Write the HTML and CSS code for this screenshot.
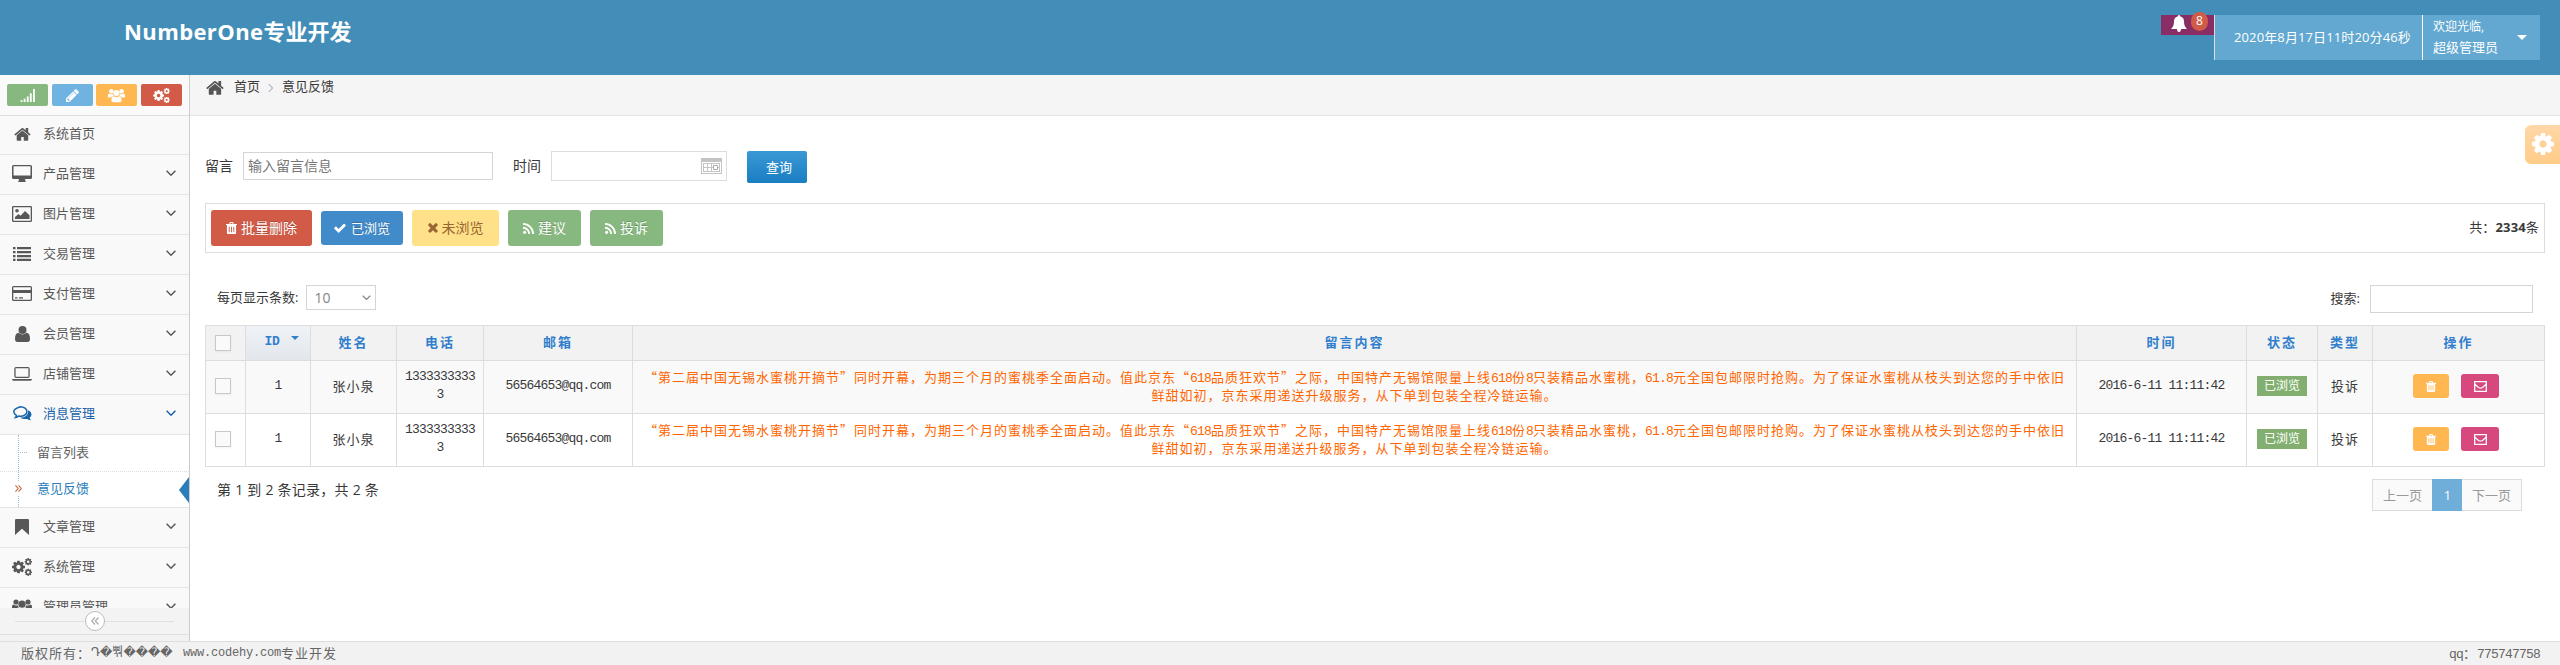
FILE: index.html
```html
<!DOCTYPE html>
<html lang="zh-CN">
<head>
<meta charset="utf-8">
<title>意见反馈</title>
<link rel="stylesheet" href="styles.css">
</head>
<body>
<svg class="defs" width="0" height="0">
  <symbol id="home" viewBox="60 160 1680 1400"><path d="M1472 992v480q0 26-19 45t-45 19h-384v-384h-256v384h-384q-26 0-45-19t-19-45v-480q0-1 .5-3t.5-3l575-474 575 474q1 2 1 6zm223-69l-62 74q-8 9-21 11h-3q-13 0-21-7l-692-577-692 577q-12 8-24 7-13-2-21-11l-62-74q-8-10-7-23.500t11-21.500l719-599q32-26 76-26t76 26l244 204v-195q0-14 9-23t23-9h192q14 0 23 9t9 23v408l219 182q10 8 11 21.500t-7 23.500z"/></symbol>
  <symbol id="cog" viewBox="128 128 1536 1536"><path d="M1152 896q0-106-75-181t-181-75-181 75-75 181 75 181 181 75 181-75 75-181zm512-109v222q0 12-8 23t-20 13l-185 28q-19 54-39 91 35 50 107 138 10 12 10 25t-9 23q-27 37-99 108t-94 71q-12 0-26-9l-138-108q-44 23-91 38-16 136-29 186-7 28-36 28h-222q-14 0-24.500-8.500t-11.500-21.500l-28-184q-49-16-90-37l-141 107q-10 9-25 9-14 0-25-11-126-114-165-168-7-10-7-23 0-12 8-23 15-21 51-66.500t54-70.500q-27-50-41-99l-183-27q-13-2-21-12.500t-8-23.500v-222q0-12 8-23t19-13l186-28q14-46 39-92-40-57-107-138-10-12-10-24 0-10 9-23 26-36 98.500-107.500t94.500-71.500q13 0 26 10l138 107q44-23 91-38 16-136 29-186 7-28 36-28h222q14 0 24.500 8.500t11.500 21.500l28 184q49 16 90 37l142-107q9-9 24-9 13 0 25 10 129 119 165 170 7 8 7 22 0 12-8 23-15 21-51 66.500t-54 70.500q26 50 41 98l183 28q13 2 21 12.500t8 23.500z"/></symbol>
  <symbol id="cogs" viewBox="0 0 20 18"><use href="#cog" x="0" y="2.500" width="13" height="13"/><use href="#cog" x="12.500" y="0" width="7.500" height="7.500"/><use href="#cog" x="12.500" y="10.500" width="7.500" height="7.500"/></symbol>
  <symbol id="pencil" viewBox="128 128 1536 1536"><path d="M491 1536l91-91-235-235-91 91v107h128v128h107zm523-928q0-22-22-22-10 0-17 7l-542 542q-7 7-7 17 0 22 22 22 10 0 17-7l542-542q7-7 7-17zm-54-192l416 416-832 832h-416v-416zm683 96q0 53-37 90l-166 166-416-416 166-165q36-38 90-38 53 0 91 38l235 234q37 39 37 91z"/></symbol>
  <symbol id="check" viewBox="100 250 1600 1300"><path d="M1671 566q0 40-28 68l-724 724-136 136q-28 28-68 28t-68-28l-136-136-362-362q-28-28-28-68t28-68l136-136q28-28 68-28t68 28l294 295 656-657q28-28 68-28t68 28l136 136q28 28 28 68z"/></symbol>
  <symbol id="times" viewBox="290 290 1220 1220"><path d="M1490 1322q0 40-28 68l-136 136q-28 28-68 28t-68-28l-294-294-294 294q-28 28-68 28t-68-28l-136-136q-28-28-28-68t28-68l294-294-294-294q-28-28-28-68t28-68l136-136q28-28 68-28t68 28l294 294 294-294q28-28 68-28t68 28l136 136q28 28 28 68t-28 68l-294 294 294 294q28 28 28 68z" transform="translate(0 -62)"/></symbol>
  <symbol id="signal" viewBox="0 0 16 14"><path d="M0 12h2v2H0zM3.300 10.500h2V14h-2zM6.700 8h2v6h-2zM10 4.500h2V14h-2zM13.400 0h2v14h-2z"/></symbol>
  <symbol id="group" viewBox="0 0 20 16"><circle cx="4" cy="3" r="2.600"/><circle cx="16" cy="3" r="2.600"/><circle cx="10" cy="5.200" r="3.600"/><path d="M0 10V7.500Q0 5.500 1.500 5.500Q3.500 7 6 6.200Q6 7.500 6.700 8.600Q4.500 8.800 3.500 10.300H1Q0 10.300 0 10zM20 10V7.500q0-2-1.500-2Q16.500 7 14 6.200q0 1.300-.7 2.400 2.200.2 3.200 1.700H19q1 0 1-.3zM4 14q0-5 3-5.200 3 2 6 0 3 .2 3 5.200 0 2-2 2H6q-2 0-2-2z"/></symbol>
  <symbol id="desktop" viewBox="0 0 20 17"><path fill-rule="evenodd" d="M1.500 0h17Q20 0 20 1.500v11q0 1.500-1.500 1.500H13l.4 2 .6 1H6l.6-1 .4-2H1.500Q0 14 0 12.500v-11Q0 0 1.500 0zm0 1.300v9.200h17V1.300z"/></symbol>
  <symbol id="image" viewBox="0 0 20 16"><path fill-rule="evenodd" d="M1.300 0h17.400Q20 0 20 1.300v13.400q0 1.300-1.300 1.300H1.300Q0 16 0 14.700V1.300Q0 0 1.300 0zm0 1.300v13.400h17.400V1.300z"/><circle cx="5" cy="4.800" r="1.800"/><path d="M3 13v-2l3.500-3 2 1.700L13 5l4.500 4.300V13z"/></symbol>
  <symbol id="list" viewBox="0 0 18 14"><path d="M0 0h2.500v2.200H0zM4 0h14v2.200H4zM0 4h2.500v2.200H0zM4 4h14v2.200H4zM0 8h2.500v2.200H0zM4 8h14v2.200H4zM0 11.800h2.500V14H0zM4 11.800h14V14H4z"/></symbol>
  <symbol id="card" viewBox="0 0 20 15"><path fill-rule="evenodd" d="M1.500 0h17Q20 0 20 1.500v12q0 1.500-1.500 1.500h-17Q0 15 0 13.500v-12Q0 0 1.500 0zm-.2 1.300V4h17.400V1.300zM1.300 7v6.700h17.400V7zM3 11.300h2.500v1.200H3zm4 0h4v1.200H7z"/></symbol>
  <symbol id="user" viewBox="0 0 15 16"><circle cx="7.500" cy="4" r="4"/><path d="M0 13q0-6 3.500-6.200 4 3.200 8 0Q15 7 15 13q0 3-2.500 3h-10Q0 16 0 13z"/></symbol>
  <symbol id="laptop" viewBox="0 0 20 14"><path fill-rule="evenodd" d="M4 0h12q1.700 0 1.700 1.700v7.600Q17.700 11 16 11H4q-1.700 0-1.700-1.700V1.700Q2.300 0 4 0zm-.4 1.300v8.400h12.800V1.300zM0 12h20q0 1.800-1.600 1.800H1.600Q0 13.800 0 12z"/></symbol>
  <symbol id="comments" viewBox="0 0 19 15"><path fill="none" stroke="currentColor" stroke-width="1.500" d="M7.300.8C11 .8 13.900 2.900 13.900 5.500S11 10.300 7.300 10.300q-.9 0-1.700-.2Q4.200 11.200 2.500 11.500q.8-1 .9-2.200Q.8 7.900.8 5.500.8 2.900 7.300.8z"/><path d="M15.300 4.200Q18.500 5.800 18.500 8.200q0 2-1.800 3.500.3 1.500 1.500 2.600-2.300 0-4-1.400Q9.800 13.600 7 11.700q8 0 8.300-7.500z"/></symbol>
  <symbol id="bookmark" viewBox="0 0 14 16"><path d="M1.200 0h11.600Q14 0 14 1.200V16l-7-6.300L0 16V1.200Q0 0 1.200 0z"/></symbol>
  <symbol id="trash" viewBox="0 0 12 13"><path fill-rule="evenodd" d="M0 2h3.500L4 .6Q4.200 0 5 0h2q.8 0 1 .6L8.500 2H12v1.200h-1V12q0 1-1 1H2q-1 0-1-1V3.200H0zm5-1l-.3 1h2.600L7 1zM3 5v6h1V5zm2.500 0v6h1V5zM8 5v6h1V5z"/></symbol>
  <symbol id="rss" viewBox="0 0 12 12"><circle cx="1.800" cy="10.200" r="1.700"/><path fill="none" stroke="currentColor" stroke-width="2" d="M0 5.200A6.800 6.800 0 0 1 6.800 12M0 1A11 11 0 0 1 11 12"/></symbol>
  <symbol id="bell" viewBox="0 0 16 17"><path d="M8 0q1 0 1 1.300 4 .9 4 5.200 0 5 3 7.500H10q0 3-2 3t-2-3H0q3-2.500 3-7.500 0-4.300 4-5.200Q7 0 8 0z"/></symbol>
  <symbol id="mail" viewBox="0 0 13 11"><path fill="none" stroke="currentColor" stroke-width="1.300" d="M.7.700h11.600v9.600H.7zM.7 3l3.800 3.500q2 1.400 4 0L12.300 3"/></symbol>
  <symbol id="down" viewBox="0 0 10 7"><path fill="none" stroke="currentColor" stroke-width="1.500" d="M.6.800L5 5.200 9.400.8"/></symbol>
  <symbol id="dleft" viewBox="0 0 8 8"><path fill="none" stroke="currentColor" stroke-width="1.200" d="M4 .5L.8 4 4 7.500M7.500.5L4.300 4l3.200 3.500"/></symbol>
  <symbol id="dright" viewBox="0 0 8 8"><path fill="none" stroke="currentColor" stroke-width="1.200" d="M.5.500L3.700 4 .5 7.500M4 .5L7.200 4 4 7.500"/></symbol>
  <symbol id="calendar" viewBox="0 0 21 16"><path fill="#c4c4c4" d="M0 0h21v16H0z"/><path fill="#fff" d="M1 4h19v11H1z"/><path fill="none" stroke="#c4c4c4" d="M2 5.500h17M2 9.500h16M2 13.500h17M2.500 5v9M6.500 5v9M10.500 5v9M18.500 5v9"/><path fill="#fff" stroke="#aaa" d="M12.500 7.500h4v4h-4z"/></symbol>
</svg>

<header class="topbar">
  <h1 class="brand"><span class="brand-latin">NumberOne</span>专业开发</h1>
  <div class="topnav">
    <div class="notice"><svg class="bell"><use href="#bell"/></svg><span class="count">8</span></div>
    <div class="clock">2020年8月17日11时20分46秒</div>
    <div class="account"><div class="who"><span class="hello">欢迎光临,</span><span>超级管理员</span></div><i class="caret"></i></div>
  </div>
</header>

<div class="body">
  <aside class="sidebar">
    <div class="shortcuts">
      <span class="sc green"><svg width="16" height="13"><use href="#signal"/></svg></span>
      <span class="sc blue"><svg width="13" height="13"><use href="#pencil"/></svg></span>
      <span class="sc orange"><svg width="17" height="15"><use href="#group"/></svg></span>
      <span class="sc red"><svg width="17" height="15"><use href="#cogs"/></svg></span>
    </div>
    <nav class="menu">
      <div class="item first"><span class="ic"><svg width="17" height="14"><use href="#home"/></svg></span>系统首页</div>
      <div class="item"><span class="ic"><svg width="20" height="17"><use href="#desktop"/></svg></span>产品管理<svg class="chev"><use href="#down"/></svg></div>
      <div class="item"><span class="ic"><svg width="20" height="16"><use href="#image"/></svg></span>图片管理<svg class="chev"><use href="#down"/></svg></div>
      <div class="item"><span class="ic"><svg width="18" height="14"><use href="#list"/></svg></span>交易管理<svg class="chev"><use href="#down"/></svg></div>
      <div class="item"><span class="ic"><svg width="20" height="15"><use href="#card"/></svg></span>支付管理<svg class="chev"><use href="#down"/></svg></div>
      <div class="item"><span class="ic"><svg width="15" height="16"><use href="#user"/></svg></span>会员管理<svg class="chev"><use href="#down"/></svg></div>
      <div class="item"><span class="ic"><svg width="20" height="14"><use href="#laptop"/></svg></span>店铺管理<svg class="chev"><use href="#down"/></svg></div>
      <div class="item open"><span class="ic"><svg width="19" height="15"><use href="#comments"/></svg></span>消息管理<svg class="chev"><use href="#down"/></svg></div>
      <div class="submenu">
        <div class="sub">留言列表</div>
        <div class="sub current"><span class="mark"><svg width="7" height="7"><use href="#dright"/></svg></span>意见反馈</div>
      </div>
      <div class="item"><span class="ic"><svg width="14" height="16"><use href="#bookmark"/></svg></span>文章管理<svg class="chev"><use href="#down"/></svg></div>
      <div class="item"><span class="ic"><svg width="20" height="18"><use href="#cogs"/></svg></span>系统管理<svg class="chev"><use href="#down"/></svg></div>
      <div class="item"><span class="ic"><svg width="20" height="16"><use href="#group"/></svg></span>管理员管理<svg class="chev"><use href="#down"/></svg></div>
    </nav>
    <div class="collapse"><span class="knob"><svg width="8" height="8"><use href="#dleft"/></svg></span></div>
    <div class="side-end"></div>
  </aside>

  <main class="main">
    <div class="crumbs"><svg width="18" height="15"><use href="#home"/></svg><span>首页</span><i class="sep"></i><span>意见反馈</span></div>
    <div class="page">
      <div class="search">
        <label>留言</label><div class="field msg">输入留言信息</div>
        <label class="l2">时间</label><div class="field date"><svg width="21" height="16"><use href="#calendar"/></svg></div>
        <div class="query">查询</div>
      </div>
      <div class="tools">
        <span class="btn del"><svg width="11" height="12"><use href="#trash"/></svg>批量删除</span>
        <span class="btn seen"><svg width="12" height="10"><use href="#check"/></svg>已浏览</span>
        <span class="btn unseen"><svg width="10" height="10"><use href="#times"/></svg>未浏览</span>
        <span class="btn ok"><svg width="11" height="11"><use href="#rss"/></svg>建议</span>
        <span class="btn ok"><svg width="11" height="11"><use href="#rss"/></svg>投诉</span>
        <span class="total">共：<b>2334</b>条</span>
      </div>
      <div class="filter">
        <span class="len">每页显示条数:</span><div class="select">10<svg width="9" height="6"><use href="#down"/></svg></div>
        <span class="find">搜索:</span><div class="field box"></div>
      </div>
      <table class="grid">
        <colgroup><col class="c1"><col class="c2"><col class="c3"><col class="c4"><col class="c5"><col class="c6"><col class="c7"><col class="c8"><col class="c9"><col class="c10"></colgroup>
        <thead><tr><th><i class="cb"></i></th><th class="sorted"><div class="idh">ID<i class="tri"></i></div></th><th>姓名</th><th>电话</th><th>邮箱</th><th>留言内容</th><th>时间</th><th>状态</th><th>类型</th><th>操作</th></tr></thead>
        <tbody>
          <tr class="odd"><td><i class="cb"></i></td><td class="n">1</td><td>张小泉</td><td class="n">1333333333<br>3</td><td class="n">56564653@qq.com</td>
            <td class="msgtext">“第二届中国无锡水蜜桃开摘节”同时开幕，为期三个月的蜜桃季全面启动。值此京东“<span class="n">618</span>品质狂欢节”之际，中国特产无锡馆限量上线<span class="n">618</span>份<span class="n">8</span>只装精品水蜜桃，<span class="n">61.8</span>元全国包邮限时抢购。为了保证水蜜桃从枝头到达您的手中依旧<br>鲜甜如初，京东采用递送升级服务，从下单到包装全程冷链运输。</td>
            <td class="n">2016-6-11 11:11:42</td><td><span class="tag">已浏览</span></td><td>投诉</td>
            <td><div class="acts"><span class="act a1"><svg width="10" height="11"><use href="#trash"/></svg></span><span class="act a2"><svg width="13" height="11"><use href="#mail"/></svg></span></div></td></tr>
          <tr><td><i class="cb"></i></td><td class="n">1</td><td>张小泉</td><td class="n">1333333333<br>3</td><td class="n">56564653@qq.com</td>
            <td class="msgtext">“第二届中国无锡水蜜桃开摘节”同时开幕，为期三个月的蜜桃季全面启动。值此京东“<span class="n">618</span>品质狂欢节”之际，中国特产无锡馆限量上线<span class="n">618</span>份<span class="n">8</span>只装精品水蜜桃，<span class="n">61.8</span>元全国包邮限时抢购。为了保证水蜜桃从枝头到达您的手中依旧<br>鲜甜如初，京东采用递送升级服务，从下单到包装全程冷链运输。</td>
            <td class="n">2016-6-11 11:11:42</td><td><span class="tag">已浏览</span></td><td>投诉</td>
            <td><div class="acts"><span class="act a1"><svg width="10" height="11"><use href="#trash"/></svg></span><span class="act a2"><svg width="13" height="11"><use href="#mail"/></svg></span></div></td></tr>
        </tbody>
      </table>
      <div class="under">
        <span class="info">第 1 到 2 条记录，共 2 条</span>
        <div class="pager"><span>上一页</span><span class="on">1</span><span>下一页</span></div>
      </div>
    </div>
    <div class="settings"><svg width="22" height="22"><use href="#cog"/></svg></div>
  </main>
</div>

<footer class="footer"><span class="copy">版权所有：<span class="garble">Դ�뿪����</span><span class="n www">www.codehy.com</span>专业开发</span><span class="qq"><span class="n">qq</span>：<span class="n">775747758</span></span></footer>
</body>
</html>
```
FILE: styles.css
```css
* { box-sizing: border-box; }
html { height: 665px; overflow: hidden; }
body { margin: 0; width: 2560px; height: 665px; overflow: hidden; position: relative; display: flex; flex-direction: column; background: #fff; color: #393939; font: 13px/20px "Open Sans", "Noto Sans CJK SC", sans-serif; }
svg { fill: currentColor; display: block; flex: none; }
i { font-style: normal; display: block; }
.defs { position: absolute; }

.topbar { height: 75px; flex: none; background: #438eb9; color: #fff; display: flex; justify-content: space-between; padding: 15px 20px 0 124px; }
.brand { margin: 0; font-size: 22px; line-height: 33px; font-weight: bold; white-space: nowrap; }
.brand-latin { letter-spacing: .4px; }
.topnav { display: flex; align-items: flex-start; height: 45px; }
.notice { width: 53px; height: 20px; background: #892e65; position: relative; }
.bell { width: 16px; height: 17px; margin-left: 10px; }
.count { position: absolute; left: 30px; top: -3px; width: 17px; height: 19px; border-radius: 9px; background: #d15b47; font-size: 12px; line-height: 18px; text-align: center; }
.clock { width: 208px; height: 45px; line-height: 45px; border-left: 1px solid #ddd; background: #62a8d1; padding-left: 19px; white-space: nowrap; letter-spacing: .12px; }
.account { width: 118px; height: 45px; border-left: 1px solid #fff; background: #62a8d1; display: flex; align-items: center; justify-content: space-between; padding: 0 13px 0 10px; }
.who { display: flex; flex-direction: column; line-height: 21px; padding-bottom: 2px; }
.hello { font-size: 12px; }
.caret { border: 5px solid transparent; border-top-color: #fff; border-bottom: 0; }

.body { flex: 1; min-height: 0; display: flex; }
.sidebar { width: 190px; flex: none; border-right: 1px solid #ccc; background: #f2f2f2; display: flex; flex-direction: column; }
.shortcuts { height: 41px; flex: none; background: #fafafa; border-bottom: 1px solid #ddd; display: flex; justify-content: space-between; padding: 9px 7px; }
.sc { width: 41px; height: 22px; border-radius: 2px; color: #fff; display: flex; align-items: center; justify-content: center; }
.green { background: #87b87f; }
.blue { background: #6fb3e0; }
.orange { background: #ffb752; }
.red { background: #d15b47; }
.menu { height: 492px; flex: none; overflow: hidden; }
.item { height: 40px; border-bottom: 1px solid #e5e5e5; background: #f9f9f9; color: #585858; display: flex; align-items: center; padding: 0 13px 4px 10px; }
.item.first { height: 39px; }
.ic { width: 24px; margin: 2px 9px 0 0; display: flex; justify-content: center; }
.chev { width: 10px; height: 7px; margin: 2px 0 0 auto; }
.item.open { color: #1963aa; }
.submenu { height: 73px; background: #fff; border-bottom: 1px solid #e5e5e5; position: relative; }
.submenu::before { content: ""; position: absolute; left: 18px; top: 0; bottom: 0; border-left: 1px dotted #9dbdd6; }
.submenu::after { content: ""; position: absolute; left: 20px; top: 17px; width: 7px; border-top: 1px dotted #9dbdd6; }
.sub { height: 36px; line-height: 34px; padding-left: 37px; color: #616161; position: relative; }
.current { color: #2b7dbc; border-top: 1px dotted #ddd; line-height: 33px; }
.current::after { content: ""; position: absolute; right: 0; top: 5px; border: 13px solid transparent; border-left: 0; border-right: 10px solid #2b7dbc; }
.mark { position: absolute; left: 14px; top: 9px; width: 9px; padding: 4px 0 4px 1px; background: #fff; color: #c86139; }
.collapse { height: 27px; flex: none; border-bottom: 1px solid #e0e0e0; background: #f3f3f3; display: flex; align-items: center; padding: 0 15px; }
.collapse::before, .collapse::after { content: ""; flex: 1; border-top: 1px solid #e0e0e0; }
.knob { width: 20px; height: 20px; border: 1px solid #bbb; border-radius: 50%; background: #fff; color: #aaa; display: flex; align-items: center; justify-content: center; }
.side-end { flex: 1; background: #f2f2f2; }

.main { flex: 1; min-width: 0; position: relative; }
.crumbs { height: 41px; background: #f5f5f5; border-bottom: 1px solid #e5e5e5; padding: 1px 0 0 16px; display: flex; align-items: flex-start; }
.crumbs svg { color: #555; margin: 4px 10px 0 0; }
.sep { width: 6px; height: 6px; border: solid #b2b6bf; border-width: 1.500px 1.500px 0 0; transform: rotate(45deg); margin: 9px 10px 0 6px; }
.page { padding: 35px 15px 0; }
.search { height: 32px; display: flex; align-items: center; font-size: 14px; }
.search label { margin-right: 10px; line-height: 30px; padding-bottom: 3px; }
.search .l2 { margin-left: 20px; }
.field { border: 1px solid #d5d5d5; background: #fff; }
.msg { width: 250px; height: 28px; padding-left: 4px; line-height: 25px; color: #777; margin-bottom: 2px; }
.date { width: 176px; height: 30px; margin-bottom: 2px; display: flex; align-items: center; justify-content: flex-end; padding-right: 4px; border-color: #ddd; }
.query { margin-left: 20px; width: 60px; height: 32px; border-radius: 2px; background: linear-gradient(#3b98d6, #197ec1); color: #fff; font-size: 13px; line-height: 32px; padding-left: 19px; }
.tools { margin-top: 20px; height: 50px; border: 1px solid #ddd; display: flex; align-items: center; padding: 0 5px 0 5px; gap: 9px; }
.btn { height: 36px; border-radius: 3px; display: flex; align-items: center; justify-content: center; gap: 4px; font-size: 14px; color: #fff; text-shadow: 0 -1px 0 rgba(0,0,0,.2); }
.del { width: 101px; background: #d15b47; }
.seen { width: 82px; height: 34px; background: #428bca; font-size: 13px; gap: 5px; }
.unseen { width: 87px; background: #fee188; color: #963; text-shadow: none; }
.ok { width: 73px; background: #87b87f; }
.total { margin-left: auto; padding-bottom: 2px; letter-spacing: .15px; }
.filter { margin-top: 32px; height: 28px; display: flex; align-items: flex-start; padding: 0 12px 0 12px; }
.len { line-height: 24px; margin-right: 8px; }
.select { width: 70px; height: 25px; border: 1px solid #d5d5d5; color: #858585; font-size: 14px; line-height: 24px; display: flex; align-items: center; justify-content: space-between; padding: 0 4px 0 7px; }
.select path { stroke-width: 2.200; }
.find { margin: 0 10px 0 auto; line-height: 26px; }
.box { width: 163px; height: 28px; }

.grid { margin-top: 12px; width: 2340px; table-layout: fixed; border-spacing: 0; border-left: 1px solid #ddd; border-top: 1px solid #ddd; font: 13px/18px "Noto Sans CJK SC", sans-serif; letter-spacing: 1px; text-align: center; }
.c1 { width: 40px; } .c2 { width: 65px; } .c3 { width: 86px; } .c4 { width: 87px; } .c5 { width: 149px; }
.c6 { width: 1444px; } .c7 { width: 170px; } .c8 { width: 71px; } .c9 { width: 55px; } .c10 { width: 172px; }
.grid th, .grid td { padding: 0; border: solid #ddd; border-width: 0 1px 1px 0; white-space: nowrap; }
.grid th { height: 35px; background: #f2f2f2; color: #307ecc; letter-spacing: 2px; padding-bottom: 3px; }
.grid th .cb { position: relative; top: 1px; }
.grid th.sorted { background: linear-gradient(#eff3f8, #e3e7ed); }
.idh { display: flex; justify-content: center; font-family: "Liberation Mono", monospace; letter-spacing: -.2px; padding-left: 7px; }
.tri { margin: 3px 0 0 11px; border: 4px solid transparent; border-top-color: #307ecc; border-bottom: 0; }
.grid td { height: 53px; padding-bottom: 2px; }
.odd { background: #f9f9f9; }
.cb { width: 16px; height: 16px; margin: 0 auto 0 9px; border: 1px solid #c8c8c8; background: #fafafa; box-shadow: 0 1px 2px rgba(0,0,0,.05); }
.n, .grid td.n { font-family: "Liberation Mono", monospace; letter-spacing: -.8px; }
.msgtext { color: #f60; }
span.n { line-height: 0; }
.tag { display: block; width: 50px; height: 20px; margin: 0 auto 0 10px; background: #82af6f; color: #fff; font-size: 12px; line-height: 17px; letter-spacing: 0; }
.acts { display: flex; gap: 12px; padding-left: 40px; }
.act { height: 24px; border-radius: 3px; color: #fff; display: flex; align-items: center; justify-content: center; }
.a1 { width: 36px; background: #ffb752; }
.a2 { width: 38px; background: #d6487e; }
.under { margin-top: 12px; height: 32px; display: flex; justify-content: space-between; padding: 0 23px 0 12px; }
.info { line-height: 21px; font-size: 14px; letter-spacing: .25px; }
.pager { display: flex; color: #999; }
.pager span { width: 60px; height: 32px; line-height: 31px; text-align: center; border: 1px solid #ddd; border-right: 0; background: #fafafa; }
.pager span:last-child { border: 1px solid #ddd; border-left: 0; }
.pager .on { width: 30px; background: #6faed9; border-color: #6faed9; color: #fff; }
.settings { position: absolute; right: 0; top: 50px; width: 35px; height: 39px; border-radius: 6px 0 0 6px; background: linear-gradient(#ffd7a8, #ffcc88); color: #fff; padding: 8px 7px; }

.footer { height: 24px; flex: none; overflow: hidden; background: #f2f2f2; border-top: 1px solid #ddd; color: #666; display: flex; justify-content: space-between; padding: 0 20px 0 21px; font: 13px/21px "Noto Sans CJK SC", sans-serif; letter-spacing: 1px; white-space: nowrap; }
.copy { display: flex; }
.garble { width: 92px; font-family: "DejaVu Sans", "Noto Sans CJK KR", sans-serif; letter-spacing: 0; font-size: 12px; }
.footer .www { font-size: 12px; letter-spacing: -.2px; line-height: 22px; }
```
